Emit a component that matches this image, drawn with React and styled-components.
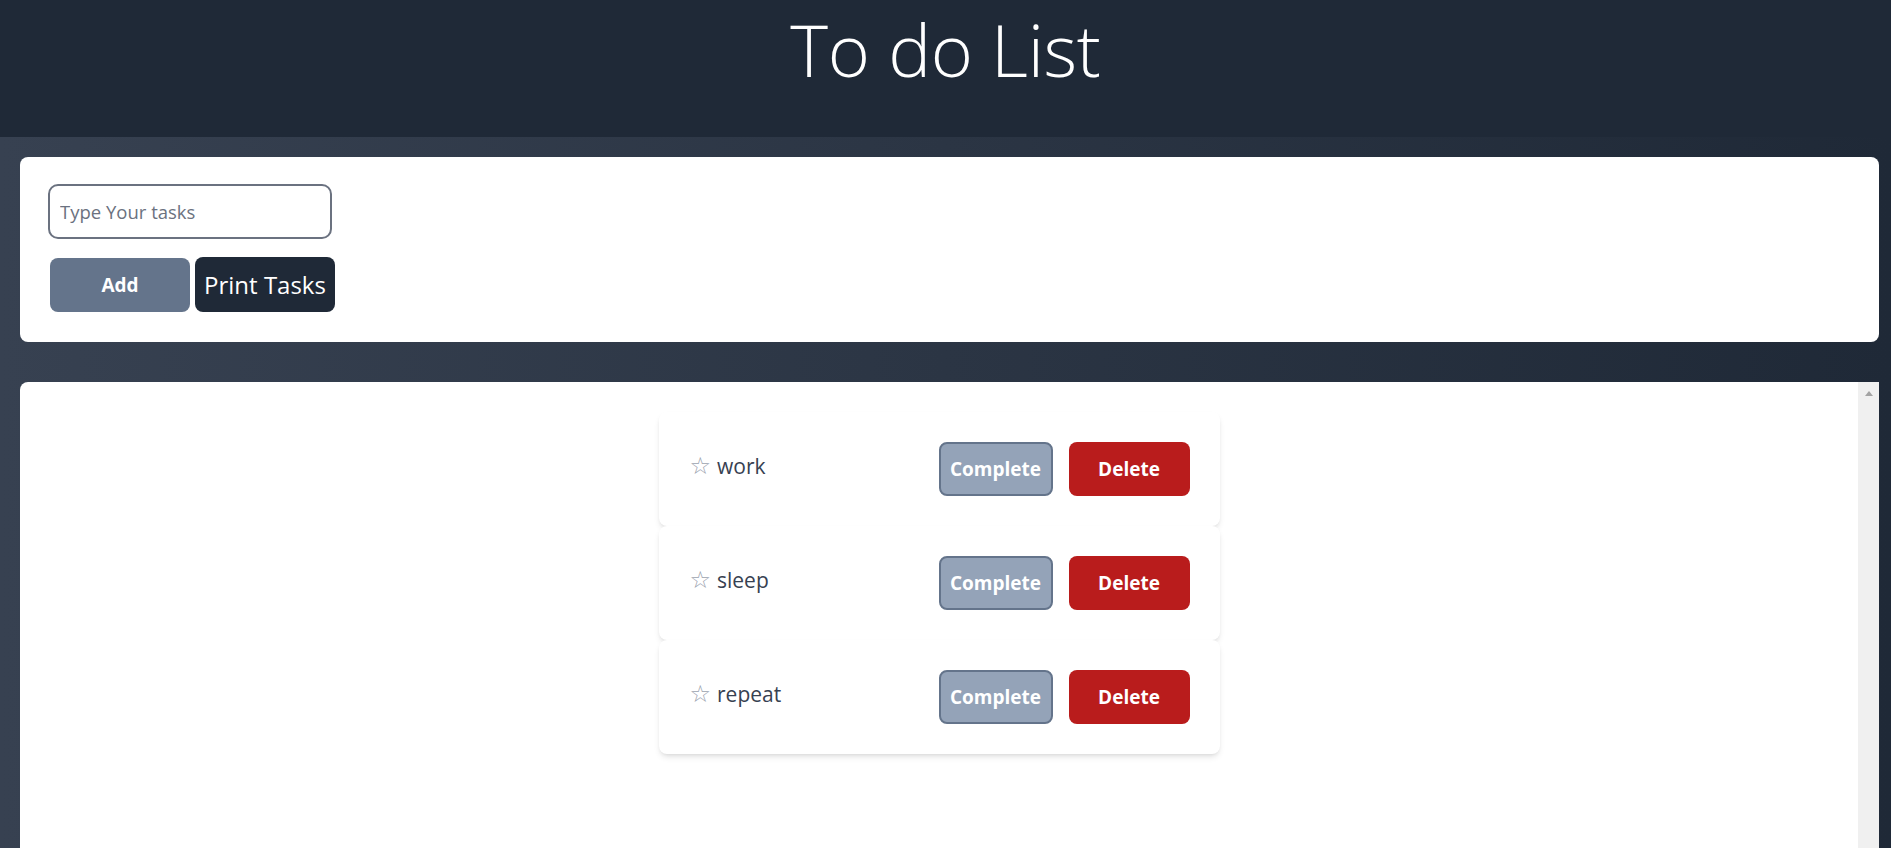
import React from "react";
import styled, { createGlobalStyle } from "styled-components";

const Global = createGlobalStyle`
  html, body {
    margin: 0;
    padding: 0;
    height: 100%;
    overflow: hidden;
  }
  body {
    font-family: "Open Sans", "Noto Sans", sans-serif;
    background: linear-gradient(to right, #374151, #1f2937);
  }
  * { box-sizing: border-box; }
`;

const Page = styled.div`
  height: 100vh;
  display: flex;
  flex-direction: column;
  overflow: hidden;
`;

const Header = styled.header`
  flex: 0 0 137px;
  background: #1f2937;
  display: flex;
  justify-content: center;
  align-items: flex-start;
`;

const Title = styled.h1`
  margin: 0;
  padding: 0 4px;
  font-size: 72px;
  line-height: normal;
  font-weight: 300;
  letter-spacing: -0.3px;
  color: #ffffff;
`;

const Main = styled.main`
  display: flex;
  flex-direction: column;
  gap: 40px;
  padding: 20px 12px 0 20px;
`;

const FormCard = styled.section`
  background: #ffffff;
  border-radius: 8px;
  padding: 27px 28px 30px;
  display: flex;
  flex-direction: column;
  align-items: flex-start;
  gap: 18px;
`;

const TaskInput = styled.input`
  width: 284px;
  height: 55px;
  border: 2px solid #6b7280;
  border-radius: 10px;
  padding: 0 10px;
  font-family: "Open Sans", sans-serif;
  font-size: 18.5px;
  color: #1f2937;
  outline: none;
  &::placeholder {
    color: #6b7280;
  }
`;

const ButtonRow = styled.div`
  display: flex;
  align-items: flex-end;
  gap: 5px;
  padding-left: 2px;
`;

const FormButton = styled.button`
  width: 140px;
  height: ${(p) => (p.$dark ? 55 : 54)}px;
  border: none;
  border-radius: 8px;
  color: #ffffff;
  font-family: "Open Sans", sans-serif;
  background: ${(p) => (p.$dark ? "#1f2937" : "#64748b")};
  font-size: ${(p) => (p.$dark ? 24 : 19)}px;
  font-weight: ${(p) => (p.$dark ? 500 : 700)};
  padding: 0;
  cursor: pointer;
`;

const ListCard = styled.section`
  height: 520px;
  background: #ffffff;
  border-radius: 8px 0 0 0;
  display: flex;
  overflow: hidden;
`;

const ListArea = styled.div`
  flex: 1;
  display: flex;
  flex-direction: column;
  align-items: center;
  padding-top: 30px;
`;

const ScrollTrack = styled.div`
  flex: 0 0 21px;
  background: #f0f0f0;
  display: flex;
  justify-content: center;
  padding-top: 9px;
`;

const ScrollArrow = styled.div`
  width: 0;
  height: 0;
  border-left: 4.5px solid transparent;
  border-right: 4.5px solid transparent;
  border-bottom: 5px solid #a3a3a3;
`;

const TaskCard = styled.div`
  width: 561px;
  height: 114px;
  background: #ffffff;
  border-radius: 8px;
  box-shadow: 0 4px 6px -1px rgba(0, 0, 0, 0.1), 0 2px 4px -2px rgba(0, 0, 0, 0.1);
  display: flex;
  align-items: center;
  justify-content: space-between;
  padding: 0 30px 0 31px;
`;

const TaskLabel = styled.div`
  display: flex;
  align-items: center;
  gap: 6px;
  margin-top: -6px;
`;

const Star = styled.span`
  font-family: "DejaVu Sans", sans-serif;
  font-size: 24px;
  line-height: 1;
  color: #9ca3af;
`;

const TaskText = styled.span`
  font-size: 21px;
  font-weight: 500;
  color: #374151;
`;

const Actions = styled.div`
  display: flex;
  gap: 16px;
`;

const ActionButton = styled.button`
  height: 54px;
  width: ${(p) => (p.$danger ? 121 : 114)}px;
  border-radius: 8px;
  border: ${(p) => (p.$danger ? "none" : "2px solid #64748b")};
  background: ${(p) => (p.$danger ? "#b91c1c" : "#94a3b8")};
  color: #ffffff;
  font-family: "Open Sans", sans-serif;
  font-size: 19px;
  font-weight: 700;
  padding: 0;
  cursor: pointer;
`;

const tasks = ["work", "sleep", "repeat"];

export default function App() {
  return (
    <Page>
      <Global />
      <Header>
        <Title>To do List</Title>
      </Header>
      <Main>
        <FormCard>
          <TaskInput placeholder="Type Your tasks" />
          <ButtonRow>
            <FormButton>Add</FormButton>
            <FormButton $dark>Print Tasks</FormButton>
          </ButtonRow>
        </FormCard>
        <ListCard>
          <ListArea>
            {tasks.map((t) => (
              <TaskCard key={t}>
                <TaskLabel>
                  <Star>☆</Star>
                  <TaskText>{t}</TaskText>
                </TaskLabel>
                <Actions>
                  <ActionButton>Complete</ActionButton>
                  <ActionButton $danger>Delete</ActionButton>
                </Actions>
              </TaskCard>
            ))}
          </ListArea>
          <ScrollTrack>
            <ScrollArrow />
          </ScrollTrack>
        </ListCard>
      </Main>
    </Page>
  );
}
